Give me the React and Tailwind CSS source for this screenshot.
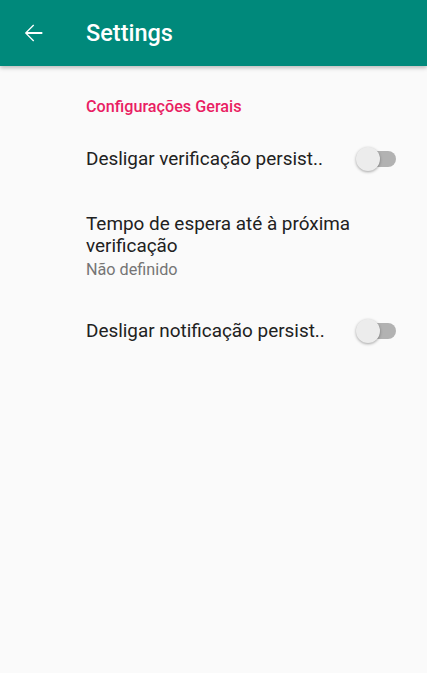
export default function App() {
  const font = { fontFamily: "Roboto, 'Noto Sans', sans-serif" };
  const Switch = () => (
    <div className="relative w-[40px] h-[24px] shrink-0">
      <div className="absolute left-[4px] top-[4px] w-[36px] h-[16px] rounded-full bg-[#b2b2b2]" />
      <div className="absolute left-0 top-0 w-[24px] h-[24px] rounded-full bg-[#ececec] shadow-[0_1px_3px_rgba(0,0,0,0.35)]" />
    </div>
  );
  return (
    <div className="w-[427px] h-[673px] bg-[#fafafa] overflow-hidden" style={font}>
      <div className="h-[66px] bg-[#00897b] flex items-center shadow-[0_2px_4px_rgba(0,0,0,0.25)] relative">
        <div className="w-[86px] flex items-center pl-[19px]">
          <svg width="28" height="28" viewBox="0 0 24 24" fill="white">
            <path d="M20 11.2H7.4l5.6-5.6L12.2 4.8 5 12l7.2 7.2.8-.8-5.6-5.6H20v-1.6z" />
          </svg>
        </div>
        <div className="text-white text-[23.5px] font-medium pt-[1px]">Settings</div>
      </div>
      <div className="pl-[86px] pr-[31px]">
        <div className="pt-[30px] text-[#e91e63] text-[16.2px] font-medium leading-[22px]">Configurações Gerais</div>
        <div className="flex items-center justify-between h-[54px] mt-[14px]">
          <div className="text-[#212121] text-[18.9px] leading-[24px]">Desligar verificação persist..</div>
          <Switch />
        </div>
        <div className="pt-[27px] pb-[23px]">
          <div className="text-[#212121] text-[18.9px] leading-[22px]">Tempo de espera até à próxima verificação</div>
          <div className="text-[#757575] text-[16.2px] leading-[22px] mt-[2px]">Não definido</div>
        </div>
        <div className="flex items-center justify-between h-[54px]">
          <div className="text-[#212121] text-[18.9px] leading-[24px]">Desligar notificação persist..</div>
          <Switch />
        </div>
      </div>
    </div>
  );
}
